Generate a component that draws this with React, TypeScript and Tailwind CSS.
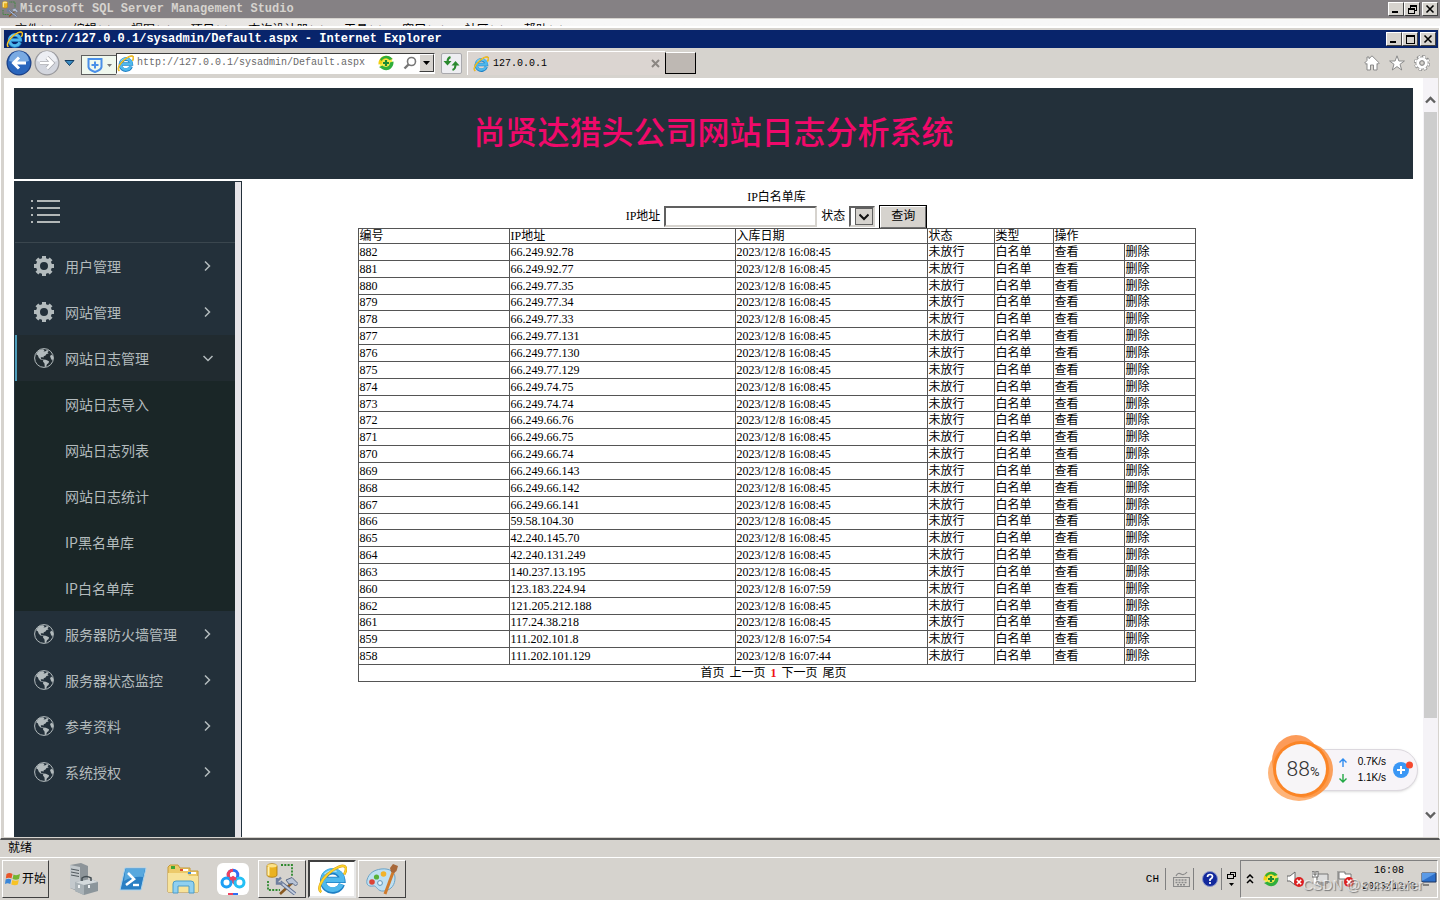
import { useState } from 'react'
import type { ReactNode } from 'react'
import clsx from 'clsx'

type MenuItem = { label: string; icon: 'gear' | 'globe'; children?: string[] }

const MENU: MenuItem[] = [
  { label: '用户管理', icon: 'gear' },
  { label: '网站管理', icon: 'gear' },
  {
    label: '网站日志管理',
    icon: 'globe',
    children: ['网站日志导入', '网站日志列表', '网站日志统计', 'IP黑名单库', 'IP白名单库'],
  },
  { label: '服务器防火墙管理', icon: 'globe' },
  { label: '服务器状态监控', icon: 'globe' },
  { label: '参考资料', icon: 'globe' },
  { label: '系统授权', icon: 'globe' },
]

const ROWS: [number, string, string][] = [
  [882, '66.249.92.78', '16:08:45'],
  [881, '66.249.92.77', '16:08:45'],
  [880, '66.249.77.35', '16:08:45'],
  [879, '66.249.77.34', '16:08:45'],
  [878, '66.249.77.33', '16:08:45'],
  [877, '66.249.77.131', '16:08:45'],
  [876, '66.249.77.130', '16:08:45'],
  [875, '66.249.77.129', '16:08:45'],
  [874, '66.249.74.75', '16:08:45'],
  [873, '66.249.74.74', '16:08:45'],
  [872, '66.249.66.76', '16:08:45'],
  [871, '66.249.66.75', '16:08:45'],
  [870, '66.249.66.74', '16:08:45'],
  [869, '66.249.66.143', '16:08:45'],
  [868, '66.249.66.142', '16:08:45'],
  [867, '66.249.66.141', '16:08:45'],
  [866, '59.58.104.30', '16:08:45'],
  [865, '42.240.145.70', '16:08:45'],
  [864, '42.240.131.249', '16:08:45'],
  [863, '140.237.13.195', '16:08:45'],
  [860, '123.183.224.94', '16:07:59'],
  [862, '121.205.212.188', '16:08:45'],
  [861, '117.24.38.218', '16:08:45'],
  [859, '111.202.101.8', '16:07:54'],
  [858, '111.202.101.129', '16:07:44'],
]

const SSMS_MENU = ['文件(F)', '编辑(E)', '视图(V)', '项目(P)', '查询设计器(Q)', '工具(T)', '窗口(W)', '社区(C)', '帮助(H)']

const mono = "font-['Liberation_Mono','Noto_Sans_CJK_SC',monospace]"
const serif = "font-['Liberation_Serif','Noto_Sans_CJK_SC',serif]"
const raised = 'border border-t-white border-l-white border-r-[#404040] border-b-[#404040] bg-[#d6d3ce]'

/* ---------- icons ---------- */

function IeLogo({ size }: { size: number }) {
  return (
    <svg width={size} height={size} viewBox="0 0 32 32" fill="none" aria-hidden="true">
      <path d="M26.500 21.500A10.300 10.300 0 1 1 27 17H9" stroke="#1d7fc4" strokeWidth="6.600" />
      <path d="M26 21.500A10.300 10.300 0 1 1 27 17H9" stroke="#4fb8ec" strokeWidth="5" />
      <path d="M8 11C11 7.500 16 6.500 21 8" stroke="#a6e2fb" strokeWidth="1.600" />
      <path
        d="M4.500 30C0 27 4 17.500 12 10.500 20 3 28.500 0 30.500 3.500 31.500 5.500 30.500 8.500 29 11"
        stroke="#d99a13"
        strokeWidth="2.800"
      />
      <path
        d="M4.500 30C0 27 4 17.500 12 10.500 20 3 28.500 0 30.500 3.500 31.500 5.500 30.500 8.500 29 11"
        stroke="#fbd42d"
        strokeWidth="1.800"
      />
    </svg>
  )
}

function StudioIcon({ size }: { size: number }) {
  return (
    <svg width={size} height={size} viewBox="0 0 32 32" fill="none" aria-hidden="true">
      <path d="M15 2H26V13M2 18V27H14" stroke="#2f8a2f" strokeWidth="1.800" strokeDasharray="2 1.300" />
      <path d="M1 3C1 0 11 0 11 3V12C11 15 1 15 1 12Z" fill="#eab221" stroke="#a97708" strokeWidth=".8" />
      <path d="M2.500 4V12.500" stroke="#fff1b0" strokeWidth="2" />
      <ellipse cx="6" cy="2.800" rx="4.800" ry="1.700" fill="#fbe28a" />
      <path d="M14 31 27 19" stroke="#8a5a22" strokeWidth="2.600" />
      <path d="M20 17 26 14.500 32 20.500 29.500 23 27 20.500 23 21Z" fill="#b9c4d6" stroke="#5a6a85" />
      <path d="M14 19 29 31" stroke="#5e6f91" strokeWidth="3.600" />
      <path d="M14 19 29 31" stroke="#c4cede" strokeWidth="1.800" />
      <path d="M11 18.500 15 14.500M11 15V20.500H16.500" stroke="#6f7f9e" strokeWidth="2.400" />
    </svg>
  )
}

function GearIcon() {
  return (
    <svg width="20" height="20" viewBox="0 0 20 20" fill="none" stroke="#b3bbbd" aria-hidden="true">
      <circle cx="10" cy="10" r="6" strokeWidth="4" />
      <path
        d="M10 0V4M10 16V20M0 10H4M16 10H20M2.900 2.900 5.700 5.700M14.300 14.300 17.100 17.100M17.100 2.900 14.300 5.700M5.700 14.300 2.900 17.100"
        strokeWidth="4"
      />
    </svg>
  )
}

function GlobeIcon() {
  return (
    <svg width="20" height="20" viewBox="0 0 20 20" aria-hidden="true">
      <circle cx="10" cy="10" r="9.400" fill="none" stroke="#b3bbbd" strokeWidth="1" />
      <path
        fill="#b3bbbd"
        d="M3 4.500 5.500 2 9 1.300 10.500 2.300 9.500 3.500 11.500 3.300 13 2 15 2.800 13.500 4.200 14.600 5.500 12.500 6 11.500 7.500 9.800 8.300 9.300 9.800 8 9 6.600 9.800 7.500 11.200 9.300 11.500 11.800 11.800 15 13.300 14.600 15 13 16.200 12 18.800 10.800 19 10.500 15.500 9 13.500 9.300 12.200 6.500 11.600 4.800 9.800 3.800 7.200 2.200 6.500Z"
      />
      <path fill="#b3bbbd" d="M17 6.500 19 8 19.200 11 18 12.200 16.900 10.500 16.200 8.500Z" />
    </svg>
  )
}

function Shield360({ size }: { size: number }) {
  return (
    <svg width={size} height={size} viewBox="0 0 16 16" aria-hidden="true">
      <circle cx="8" cy="8" r="6.500" fill="#f7ea4a" />
      <path d="M.5 9.500C0 3 6-1 11 1.500L15 4 11.500 5.500C8 2.500 4 4.500 4 8.500Z" fill="#f0cf12" />
      <path d="M2 4.500C5 0 11-.5 14.500 4L11.500 5C9 2.500 5.500 2.500 3.500 6Z" fill="#2fae3c" />
      <path d="M15.500 6.500C16 13 10 17 5 14.500L1 12 4.500 10.500C8 13.500 12 11.500 12 7.500Z" fill="#2fae3c" />
      <path d="M8 5V11M5 8H11" stroke="#1c8a35" strokeWidth="2.200" />
    </svg>
  )
}

function Mute() {
  return (
    <g>
      <circle cx="12" cy="11" r="5" fill="#dc2020" />
      <path d="M9.800 8.800 14.200 13.200M14.200 8.800 9.800 13.200" stroke="#fff" strokeWidth="1.600" />
    </g>
  )
}

/* ---------- window chrome ---------- */

function CaptionButton({ label, children }: { label: string; children: ReactNode }) {
  return (
    <button aria-label={label} className={clsx('flex h-[14px] w-4 items-center justify-center', raised)}>
      <svg width="10" height="10" viewBox="0 0 10 10" fill="none" stroke="#000" shapeRendering="crispEdges">
        {children}
      </svg>
    </button>
  )
}

function CaptionButtons({ maximized }: { maximized?: boolean }) {
  return (
    <div className="flex">
      <CaptionButton label="最小化">
        <path d="M1 8H7" strokeWidth="2" />
      </CaptionButton>
      {maximized ? (
        <CaptionButton label="还原">
          <path d="M3 1H9V6H7M3 1V4M3 2H9" />
          <path d="M1 4H7V9H1ZM1 5H7" />
        </CaptionButton>
      ) : (
        <CaptionButton label="最大化">
          <path d="M1 1H9V9H1ZM1 2H9" />
        </CaptionButton>
      )}
      <div className="w-[2px]" />
      <CaptionButton label="关闭">
        <path d="M1.500 1.500 8.500 8.500M8.500 1.500 1.500 8.500" strokeWidth="1.600" shapeRendering="auto" />
      </CaptionButton>
    </div>
  )
}

function StudioWindow() {
  return (
    <div className="shrink-0">
      <div className="flex h-[18px] items-center justify-between bg-[#858184] pr-[2px] pl-[2px]">
        <div className="flex items-center gap-[2px]">
          <StudioIcon size={16} />
          <span className={clsx('text-xs leading-4 font-bold whitespace-pre text-[#d6d3ce]', mono)}>
            Microsoft SQL Server Management Studio
          </span>
        </div>
        <CaptionButtons maximized />
      </div>
      <div className="flex h-2 gap-[19px] overflow-hidden border-t border-[#d6d3ce] bg-linear-to-r from-[#dedad6] to-[#f7f7f7] to-40% pt-[3px] pl-[15px]">
        {SSMS_MENU.map((m) => (
          <span key={m} className={clsx('text-[12px] leading-4 whitespace-nowrap', serif)}>
            {m}
          </span>
        ))}
      </div>
    </div>
  )
}

function NavBar() {
  return (
    <div className="flex h-[30px] shrink-0 items-center bg-[#d6d3ce] pr-2 pl-[2px]">
      <button aria-label="后退" className="shrink-0">
        <svg width="27" height="28" viewBox="0 0 27 28" fill="none">
          <circle cx="13" cy="14" r="12.500" fill="#1b3f85" />
          <circle cx="13" cy="14" r="11.300" fill="#2a66bd" />
          <path d="M3 12A10 10 0 0 1 23 12Q13 15 3 12Z" fill="#7aaae2" />
          <path d="M20 14H8M13 8.500 7.500 14 13 19.500" stroke="#fff" strokeWidth="3" />
        </svg>
      </button>
      <button aria-label="前进" className="shrink-0">
        <svg width="28" height="28" viewBox="0 0 28 28" fill="none">
          <circle cx="14" cy="14" r="12.500" fill="#98989c" />
          <circle cx="14" cy="14" r="11.300" fill="#d3d6de" />
          <path d="M4 12A10 10 0 0 1 24 12Q14 15 4 12Z" fill="#eceef3" />
          <path d="M7 14H19M14 8.500 19.500 14 14 19.500" stroke="#a7a8ae" strokeWidth="4" />
          <path d="M7 14H19M14 8.500 19.500 14 14 19.500" stroke="#fff" strokeWidth="2.600" />
        </svg>
      </button>
      <svg width="20" height="10" viewBox="0 0 20 10" className="shrink-0" aria-hidden="true">
        <path d="M4 2.500H13L8.500 7.500Z" fill="#3b8cc4" stroke="#123c60" />
      </svg>
      <button
        aria-label="安全"
        className="mt-1 flex h-5 w-[35px] shrink-0 items-center justify-center gap-1 border border-r-0 border-[#606060] bg-[#f0f8ee]"
      >
        <svg width="16" height="16" viewBox="0 0 16 16" fill="none" stroke="#4a8fe8">
          <path d="M1.500 2H14.500V10Q14 13 8 15 2 13 1.500 10Z" strokeWidth="2" />
          <path d="M8 4.500V11.500M4.500 8H11.500" strokeWidth="2" />
        </svg>
        <svg width="5" height="3" viewBox="0 0 5 3">
          <path d="M0 0H5L2.500 3Z" fill="#777" />
        </svg>
      </button>
      <div className="flex h-[21px] w-[319px] shrink-0 items-center border border-t-[#404040] border-r-white border-b-white border-l-[#404040] bg-white">
        <IeLogo size={17} />
        <label htmlFor="address" className="sr-only">
          地址
        </label>
        <div className="ml-[3px] min-w-0 flex-1">
          <input
            id="address"
            defaultValue="http://127.0.0.1/sysadmin/Default.aspx"
            className={clsx('block w-full text-[10px] leading-4 text-[#6a6a6a] outline-none', mono)}
          />
        </div>
        <Shield360 size={16} />
        <button aria-label="搜索" className="mr-px ml-2 flex w-4 justify-center">
          <svg width="14" height="14" viewBox="0 0 14 14" fill="none" stroke="#777">
            <circle cx="8.500" cy="5.500" r="4" strokeWidth="1.600" />
            <path d="M5.500 8.500 1.500 12.500" strokeWidth="2.400" />
          </svg>
        </button>
        <button aria-label="下拉" className={clsx('flex h-[18px] w-[15px] items-center justify-center', raised)}>
          <svg width="7" height="4" viewBox="0 0 7 4">
            <path d="M0 0H7L3.500 4Z" />
          </svg>
        </button>
      </div>
      <button
        aria-label="刷新"
        className="ml-[6px] flex h-[21px] w-[21px] shrink-0 items-center justify-center rounded-[2px] border border-[#a9a9ad] bg-[#eeeef2]"
      >
        <svg width="17" height="17" viewBox="0 0 17 17" fill="none" stroke="#2a8a2f" strokeWidth="2">
          <path d="M7.500 2Q4.500 3 4.500 7" />
          <path d="M.5 6H8.500L4.500 10.500Z" fill="#2a8a2f" stroke="none" />
          <path d="M9.500 15Q12.500 14 12.500 10" />
          <path d="M8.500 10.500H16.500L12.500 6Z" fill="#2a8a2f" stroke="none" />
        </svg>
      </button>
      <div className="ml-[5px] flex h-6 w-[198px] shrink-0 items-center border-t border-l border-white bg-[#dbd5d1] px-[5px]">
        <IeLogo size={16} />
        <span className={clsx('ml-1 flex-1 text-[10px] leading-4', mono)}>127.0.0.1</span>
        <button aria-label="关闭标签页">
          <svg width="9" height="9" viewBox="0 0 9 9" stroke="#8b8682" strokeWidth="2">
            <path d="M1 1 8 8M8 1 1 8" />
          </svg>
        </button>
      </div>
      <button
        aria-label="新建标签页"
        className="h-[22px] w-[31px] shrink-0 border border-t-white border-r-black border-b-black border-l-black bg-[#beb8b3]"
      />
      <div className="ml-auto flex items-center gap-[9px]">
        <button aria-label="主页">
          <svg width="16" height="16" viewBox="0 0 16 16" fill="#fff" stroke="#8a8a8a">
            <path d="M8 .8 15.300 8 14 9.300 13 8.500V15H9.500V10H6.500V15H3V8.500L2 9.300.7 8 3 5.500V2H5V3.700Z" />
          </svg>
        </button>
        <button aria-label="收藏夹">
          <svg width="16" height="16" viewBox="0 0 16 16" fill="#fff" stroke="#8a8a8a">
            <path d="M8 .8 9.900 6H15.400L11 9.300 12.700 15 8 11.600 3.300 15 5 9.300.6 6H6.100Z" />
          </svg>
        </button>
        <button aria-label="工具">
          <svg width="16" height="16" viewBox="0 0 16 16" fill="none">
            <circle cx="8" cy="8" r="6.800" stroke="#8a8a8a" strokeWidth="2.400" strokeDasharray="3.300 2.040" />
            <circle cx="8" cy="8" r="4.200" stroke="#8a8a8a" strokeWidth="4.600" />
            <circle cx="8" cy="8" r="6.500" stroke="#fff" strokeWidth="1.800" strokeDasharray="2.100 3" strokeDashoffset="-.5" />
            <circle cx="8" cy="8" r="4.200" stroke="#fff" strokeWidth="3" />
            <circle cx="8" cy="8" r="2.200" fill="#d6d3ce" stroke="#8a8a8a" />
          </svg>
        </button>
      </div>
    </div>
  )
}

function ScrollBar() {
  return (
    <div className="flex w-[15px] shrink-0 flex-col items-center bg-[#f5f3f7] py-4">
      <svg width="11" height="11" viewBox="0 0 11 11" fill="none" stroke="#606060" strokeWidth="2.400">
        <path d="M1 8.500 5.500 4 10 8.500" />
      </svg>
      <div className="mt-[7px] mb-[92px] w-[13px] flex-1 bg-[#cdcdcd]" />
      <svg width="11" height="11" viewBox="0 0 11 11" fill="none" stroke="#606060" strokeWidth="2.400">
        <path d="M1 2.500 5.500 7 10 2.500" />
      </svg>
    </div>
  )
}

/* ---------- page ---------- */

function Sidebar() {
  const [open, setOpen] = useState('网站日志管理')

  return (
    <aside className="flex w-[228px] shrink-0 border-t border-r border-l border-[#23303a] bg-[#23303a]">
      <nav className="min-w-0 flex-1 font-['Noto_Sans_CJK_SC',sans-serif] text-sm text-[#b3bbbd]">
        <div className="flex h-[61px] items-center border-b border-[#3a464e] pl-4">
          <button aria-label="菜单">
            <svg width="29" height="24" viewBox="0 0 29 24" stroke="#b3b8b8" strokeWidth="2" shapeRendering="crispEdges">
              <path d="M0 1H2M6 1H29M0 8H2M6 8H29M0 15H2M6 15H29M0 22H2M6 22H29" />
            </svg>
          </button>
        </div>
        <ul>
          {MENU.map((m) => {
            const active = m.label === open
            return (
              <li key={m.label}>
                <button
                  onClick={() => setOpen(active ? '' : m.label)}
                  className={clsx(
                    'flex h-[46px] w-full items-center border-l-2 pr-5 pl-[17px] text-left',
                    active ? 'border-[#4d9dba] bg-[#212b30]' : 'border-transparent',
                  )}
                >
                  {m.icon === 'gear' ? <GearIcon /> : <GlobeIcon />}
                  <span className="ml-[11px] flex-1">{m.label}</span>
                  <svg width="12" height="12" viewBox="0 0 12 12" fill="none" stroke="#b3bbbd" strokeWidth="1.500">
                    <path d={active ? 'M.5 4 5 8.500 9.500 4' : 'M2 1.500 6.500 6 2 10.500'} />
                  </svg>
                </button>
                {active && m.children && (
                  <ul className="bg-[#1a2627]">
                    {m.children.map((c) => (
                      <li key={c}>
                        <a href="#" className="flex h-[46px] items-center pl-[50px]">
                          {c}
                        </a>
                      </li>
                    ))}
                  </ul>
                )}
              </li>
            )
          })}
        </ul>
      </nav>
      <div className="w-[6px] bg-[#e6e4e8]" />
    </aside>
  )
}

function WhiteList() {
  const cell = 'border border-[#555] p-0 pl-px text-left font-normal'

  return (
    <main className={clsx('flex min-w-0 flex-1 flex-col items-center pt-[9px] pr-[102px] text-xs leading-[15px] text-black', serif)}>
      <h2>IP白名单库</h2>
      <form className="flex h-[23px] items-center gap-1" onSubmit={(e) => e.preventDefault()}>
        <label htmlFor="ip">IP地址</label>
        <input
          id="ip"
          className="h-[21px] w-[153px] border-2 border-t-[#606060] border-r-[#d6d3ce] border-b-[#d6d3ce] border-l-[#606060] bg-white px-1 outline-none"
        />
        <label htmlFor="status">状态</label>
        <div className="relative flex">
          <select
            id="status"
            className="h-[21px] w-[26px] appearance-none border-2 border-t-[#606060] border-r-[#d6d3ce] border-b-[#d6d3ce] border-l-[#606060] bg-white outline-none"
          >
            <option value="" />
          </select>
          <span className="pointer-events-none absolute top-[2px] right-[2px] flex h-[17px] w-[18px] items-center justify-center border border-[#606060] bg-[#d6d3ce]">
            <svg width="10" height="8" viewBox="0 0 10 8" fill="none" stroke="#111" strokeWidth="2">
              <path d="M.5 1.500 5 6 9.500 1.500" />
            </svg>
          </span>
        </div>
        <button className="h-6 w-12 border border-black bg-black">
          <span className="flex h-full items-center justify-center border border-t-white border-r-[#707070] border-b-[#707070] border-l-white bg-[#d6d3ce]">
            查询
          </span>
        </button>
      </form>
      <table className="h-[454px] w-[838px] table-fixed border-collapse leading-[14px]">
        <colgroup>
          <col className="w-[151px]" />
          <col className="w-[226px]" />
          <col className="w-[192px]" />
          <col className="w-[67px]" />
          <col className="w-[59px]" />
          <col className="w-[71px]" />
          <col />
        </colgroup>
        <thead>
          <tr>
            <th className={cell}>编号</th>
            <th className={cell}>IP地址</th>
            <th className={cell}>入库日期</th>
            <th className={cell}>状态</th>
            <th className={cell}>类型</th>
            <th className={cell} colSpan={2}>
              操作
            </th>
          </tr>
        </thead>
        <tbody>
          {ROWS.map(([id, ip, time]) => (
            <tr key={id}>
              <td className={cell}>{id}</td>
              <td className={cell}>{ip}</td>
              <td className={cell}>2023/12/8 {time}</td>
              <td className={cell}>未放行</td>
              <td className={cell}>白名单</td>
              <td className={cell}>
                <a href="#">查看</a>
              </td>
              <td className={cell}>
                <a href="#">删除</a>
              </td>
            </tr>
          ))}
          <tr>
            <td colSpan={7} className="border border-[#555] p-0 text-center">
              <span className="flex justify-center gap-[5px] pr-[6px]">
                <a href="#">首页</a>
                <a href="#">上一页</a>
                <b className="text-[#f01414]">1</b>
                <a href="#">下一页</a>
                <a href="#">尾页</a>
              </span>
            </td>
          </tr>
        </tbody>
      </table>
    </main>
  )
}

function SpeedLine({ color, d, text }: { color: string; d: string; text: string }) {
  return (
    <div className="flex items-center justify-between text-[10px] leading-3 text-black">
      <svg width="8" height="9" viewBox="0 0 8 9" fill="none" stroke={color} strokeWidth="1.400">
        <path d={d} />
      </svg>
      <span>{text}</span>
    </div>
  )
}

function SpeedBall() {
  return (
    <div className="absolute right-[22px] bottom-[98px] flex h-[68px] w-[150px] items-center pt-1 font-['Liberation_Sans',sans-serif]">
      <div className="ml-8 flex h-[42px] flex-1 items-center rounded-r-full border border-[#dcd8de] bg-[#f7f4f8] pr-1 pl-[38px] shadow-sm">
        <div className="flex flex-1 flex-col gap-1">
          <SpeedLine color="#2f8cf0" d="M4 9V1M.5 4.500 4 1 7.500 4.500" text="0.7K/s" />
          <SpeedLine color="#22a845" d="M4 0V8M.5 4.500 4 8 7.500 4.500" text="1.1K/s" />
        </div>
        <svg width="22" height="20" viewBox="0 0 22 20" className="ml-[5px]">
          <circle cx="10" cy="10" r="8" fill="#3a97f5" />
          <path d="M10 6V14M6 10H14" stroke="#fff" strokeWidth="2" />
          <circle cx="18.500" cy="5" r="3.500" fill="#f5482e" />
        </svg>
      </div>
      <div className="absolute top-0 left-0 flex">
        <svg width="66" height="68" viewBox="0 0 66 68">
          <ellipse cx="28" cy="27" rx="24" ry="26" fill="#fb8a3c" opacity=".85" />
          <ellipse cx="36" cy="36" rx="29" ry="28" fill="#fb8428" opacity=".75" />
          <ellipse cx="31" cy="39" rx="31" ry="28" fill="#fd9440" opacity=".7" />
          <circle cx="33" cy="35" r="28" fill="#fb8526" />
          <circle cx="33" cy="35" r="25" fill="#f7f5f7" />
        </svg>
        <span className="absolute inset-0 flex items-baseline justify-center pt-[20px] pl-1 font-['Roboto',sans-serif] text-[21px] font-light text-[#333]">
          88<span className="text-[13px] font-normal">%</span>
        </span>
      </div>
    </div>
  )
}

function Browser() {
  return (
    <div className="flex min-h-0 flex-1 flex-col border-2 border-x border-white border-b-[#555]">
      <div className="flex min-h-0 flex-1 flex-col border-t-2 border-r border-b border-l-3 border-[#d6d3ce] bg-white">
        <div className="flex h-[18px] shrink-0 items-center justify-between bg-[#08246b] px-[2px]">
          <div className="flex items-center gap-px">
            <IeLogo size={17} />
            <h1 className={clsx('text-xs leading-4 font-bold whitespace-pre text-white', mono)}>
              http://127.0.0.1/sysadmin/Default.aspx - Internet Explorer
            </h1>
          </div>
          <CaptionButtons />
        </div>
        <NavBar />
        <div className="flex min-h-0 flex-1">
          <div className="flex min-w-0 flex-1 flex-col gap-[2px] px-[10px] pt-[10px]">
            <header className="flex h-[91px] shrink-0 items-center justify-center bg-[#23303a] pb-2 font-['Noto_Sans_CJK_SC',sans-serif] text-[32px] font-medium text-[#f0096a]">
              尚贤达猎头公司网站日志分析系统
            </header>
            <div className="flex min-h-0 flex-1">
              <Sidebar />
              <WhiteList />
            </div>
          </div>
          <ScrollBar />
        </div>
      </div>
    </div>
  )
}

/* ---------- taskbar ---------- */

function ServerIcon() {
  return (
    <svg width="30" height="32" viewBox="0 0 30 32" aria-hidden="true">
      <path d="M1 2 12 0 19 3V26L8 28 1 25Z" fill="#8d9499" />
      <path d="M1 2 11 4V28L1 25Z" fill="#c3c9cd" />
      <path d="M2 6 10 7.500M2 9 10 10.500M2 12 10 13.500" stroke="#4f585e" />
      <path d="M6 19 22 16 29 19V28L15 32 6 28Z" fill="#8b959b" />
      <path d="M6 19 15 21.500V32L6 28Z" fill="#a9b2b7" />
      <path d="M6 19 22 16 29 19 15 22Z" fill="#d4dadd" />
      <path d="M13 18V15Q17 12 22 15V18" fill="none" stroke="#444d53" strokeWidth="1.500" />
      <path d="M10 22V25M20 22V25" stroke="#eef2f4" strokeWidth="2" />
    </svg>
  )
}

function PowerShellIcon() {
  return (
    <svg width="28" height="24" viewBox="0 0 28 24" fill="none" aria-hidden="true">
      <path d="M6 1H27L22 23H1Z" fill="#2a7fc4" stroke="#a9d3ee" />
      <path d="M6.500 2H26L24 10Q14 9 5 14Z" fill="#58a8de" />
      <path d="M9 6 15 12 7 18" stroke="#fff" strokeWidth="2.600" />
      <path d="M14 18H20" stroke="#fff" strokeWidth="2.400" />
    </svg>
  )
}

function FolderIcon() {
  return (
    <svg width="32" height="30" viewBox="0 0 32 30" aria-hidden="true">
      <path d="M1 3 3 1H11L13 4H23V7H31V28H1Z" fill="#ecca6a" stroke="#c79a36" />
      <path d="M4 2H8V5H4Z" fill="#3aa535" />
      <path d="M13 5H21V7H13ZM21 8H29V10H21Z" fill="#fff" />
      <path d="M13 5H16V7H13Z" fill="#df4b2a" />
      <path d="M21 8H24V10H21Z" fill="#3b8fd8" />
      <path d="M1 9H20L22 12H31V28H1Z" fill="#f7e39a" />
      <path d="M6 29V20Q6 17 9 17H24Q27 17 27 20V29H22V22H11V29Z" fill="#8fd0f0" stroke="#4a9cc9" />
    </svg>
  )
}

function NetdiskIcon() {
  return (
    <svg width="32" height="32" viewBox="0 0 32 32" fill="none" aria-hidden="true">
      <rect width="32" height="32" rx="6" fill="#fff" />
      <circle cx="16" cy="12" r="4.800" stroke="#2f6ff2" strokeWidth="3" />
      <path d="M16 7.200A4.800 4.800 0 0 0 11.200 12Q11.500 15 14 17L18.500 21" stroke="#f0415e" strokeWidth="3" />
      <circle cx="9.500" cy="19.500" r="4.500" stroke="#1ea0f5" strokeWidth="3" />
      <circle cx="22.500" cy="19.500" r="4.500" stroke="#24c0f5" strokeWidth="3" />
      <path d="M13 16.500 16 14.500 19 16.500" stroke="#f0415e" strokeWidth="3" />
      <path d="M11 31H16" stroke="#f0415e" strokeWidth="2" />
      <path d="M16 31H21" stroke="#2f6ff2" strokeWidth="2" />
    </svg>
  )
}

function PaintIcon() {
  return (
    <svg width="34" height="32" viewBox="0 0 34 32" aria-hidden="true">
      <path
        d="M16 6C25 5 30 9 30 15 30 21 27 27 19 28 12 29 12 22 8 23 3 24 1 21 2 17 4 10 9 7 16 6Z"
        fill="#bfe0f2"
        stroke="#6aa3c8"
      />
      <circle cx="7" cy="19" r="2.800" fill="#dc4436" />
      <circle cx="11.500" cy="14" r="2.600" fill="#58b13a" />
      <circle cx="18.500" cy="11" r="2.800" fill="#f2b32a" />
      <circle cx="15" cy="20" r="2.400" fill="#e9f5fb" stroke="#5d93b5" />
      <path d="M28.500 8 20 31" stroke="#cf7a2c" strokeWidth="3" />
      <path d="M25 5 28 1 33 3 31.500 8 29 10 26 9Z" fill="#a8683a" />
    </svg>
  )
}

function Tray() {
  return (
    <div className="relative flex h-[38px] w-[198px] items-center border border-t-[#808080] border-r-white border-b-white border-l-[#808080] pl-[5px]">
      <svg width="8" height="10" viewBox="0 0 8 10" fill="none" stroke="#000" strokeWidth="1.500">
        <path d="M1 4 4 1 7 4M1 9 4 6 7 9" />
      </svg>
      <div className="ml-[9px] flex gap-2">
        <Shield360 size={16} />
        <svg width="17" height="16" viewBox="0 0 17 16">
          <path d="M0 5H3L8 1V14L3 10H0Z" fill="#fff" stroke="#666" />
          <Mute />
        </svg>
        <svg width="17" height="16" viewBox="0 0 17 16">
          <path d="M5 3H16V12H5Z" fill="#ddd" stroke="#777" />
          <path d="M1 1V5H5V1M3 5V12H6" fill="none" stroke="#fff" strokeWidth="2" />
          <path d="M0 0H2V4H4V0H6V6H0ZM7 14H14" fill="none" stroke="#666" />
        </svg>
        <svg width="17" height="16" viewBox="0 0 17 16">
          <path d="M1 0V15M2 1H8V3H14V10H8V8H2Z" fill="#fff" stroke="#777" />
          <Mute />
        </svg>
      </div>
      <div className={clsx('ml-[6px] flex w-[58px] flex-col items-center text-[10px] leading-4 text-black', mono)}>
        <span>16:08</span>
        <span>2023/12/8</span>
      </div>
      <svg width="16" height="14" viewBox="0 0 16 14" className="ml-auto">
        <path d="M1 1H15V10H1Z" fill="#2d6fc9" stroke="#1d355c" />
        <path d="M1 1H15L1 9Z" fill="#5b9ae6" />
        <path d="M2 13H8" stroke="#333" />
      </svg>
      <span className="pointer-events-none absolute top-[14px] left-[62px] font-['Liberation_Sans',sans-serif] text-sm leading-5 whitespace-nowrap text-white/60 [text-shadow:1px_1px_1px_#777]">
        CSDN @sunsharer
      </span>
    </div>
  )
}

function TaskBar() {
  return (
    <footer className={clsx('flex h-[43px] shrink-0 items-center border-t border-white bg-[#d6d3ce] pr-[2px] pl-[2px] text-xs', serif)}>
      <button className={clsx('flex h-[38px] w-[47px] items-center justify-center gap-px', raised)}>
        <svg width="16" height="16" viewBox="0 0 16 16">
          <path d="M1.500 3Q4.500 1 7.500 3L6.500 7.500Q4 6 .8 7.500Z" fill="#e8562a" />
          <path d="M8.500 3.500Q11.500 5 15 3L14 8Q11 9.500 7.500 8Z" fill="#74b530" />
          <path d="M.6 8.500Q3.500 7 6.300 8.500L5.300 13Q2.500 11.500 0 13Z" fill="#3a86d8" />
          <path d="M7.300 9Q10.500 10.500 13.800 9L12.800 13.500Q10 15 6.300 13.500Z" fill="#f7c325" />
        </svg>
        <span>开始</span>
      </button>
      <div className="ml-5 flex items-center gap-5">
        <button aria-label="服务器管理器">
          <ServerIcon />
        </button>
        <button aria-label="PowerShell">
          <PowerShellIcon />
        </button>
        <button aria-label="资源管理器">
          <FolderIcon />
        </button>
        <button aria-label="网盘" className="-ml-[2px]">
          <NetdiskIcon />
        </button>
      </div>
      <div className="ml-[9px] flex gap-[2px]">
        <button aria-label="Management Studio" className={clsx('flex h-[38px] w-12 items-center justify-center', raised)}>
          <StudioIcon size={32} />
        </button>
        <button
          aria-label="Internet Explorer"
          className="flex h-[38px] w-12 items-center justify-center border-2 border-t-[#404040] border-r-[#e8e8e8] border-b-[#e8e8e8] border-l-[#404040] bg-white"
        >
          <IeLogo size={30} />
        </button>
        <button aria-label="画图" className={clsx('flex h-[38px] w-12 items-center justify-center', raised)}>
          <PaintIcon />
        </button>
      </div>
      <div className="ml-auto flex items-center">
        <span className={clsx('mr-[6px] text-[11px]', mono)}>CH</span>
        <div className="flex h-[22px] w-7 items-center justify-center border-l border-[#808080] pl-1">
          <svg width="17" height="16" viewBox="0 0 17 16" fill="none" stroke="#8a8a8a">
            <path d="M.5 6.500H16.500V15.500H.5ZM3 5Q5 1 8 3 11 5 14 1" strokeWidth="1.200" />
            <path d="M2.500 9H14.500M2.500 11.500H14.500M4 13.800H13" strokeDasharray="2 1" strokeWidth="1.500" />
          </svg>
        </div>
        <div className="flex h-[22px] w-7 items-center justify-center border-l border-[#808080] pl-1">
          <svg width="16" height="16" viewBox="0 0 16 16" fill="none">
            <circle cx="8" cy="8" r="7.500" fill="#12289c" stroke="#8a94c8" />
            <path d="M5.500 6Q5.500 3.500 8 3.500 10.500 3.500 10.500 5.800 10.500 7 8 8.500V10M8 11V13" stroke="#fff" strokeWidth="1.700" />
          </svg>
        </div>
        <div className="flex h-[22px] w-[19px] flex-col items-center justify-center gap-1 border-l border-[#808080]">
          <svg width="9" height="7" viewBox="0 0 9 7" fill="none" stroke="#000" shapeRendering="crispEdges">
            <path d="M3.500 2V.5H8.500V4H6.500M.5 2.500H6V6H.5Z" />
          </svg>
          <svg width="5" height="3" viewBox="0 0 5 3">
            <path d="M0 0H5L2.500 3Z" />
          </svg>
        </div>
        <Tray />
      </div>
    </footer>
  )
}

export default function App() {
  return (
    <div className="relative flex h-screen flex-col overflow-hidden bg-[#d6d3ce]">
      <StudioWindow />
      <Browser />
      <div className={clsx('flex h-[17px] shrink-0 items-center bg-[#d6d3ce] pl-2 text-xs leading-[15px] text-black', serif)}>就绪</div>
      <TaskBar />
      <SpeedBall />
    </div>
  )
}
